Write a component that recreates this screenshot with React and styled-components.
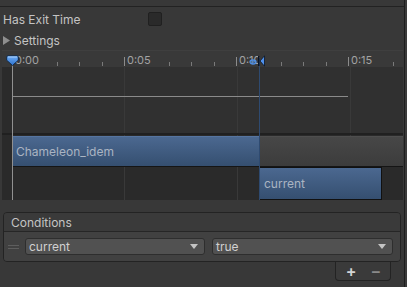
import React from 'react';
import styled, { createGlobalStyle } from 'styled-components';

const PX_PER_SEC = 22.4;
const ORIGIN = 10;
const toX = (t) => ORIGIN + t * PX_PER_SEC;

const GlobalStyle = createGlobalStyle`
  html, body {
    margin: 0;
    padding: 0;
    background: #3a3a3a;
  }
  body {
    font-family: Inter, "Noto Sans", sans-serif;
  }
`;

const Panel = styled.div`
  width: 405px;
  height: 287px;
  box-sizing: border-box;
  background: #383838;
  border-right: 1px solid #1e1e1e;
  display: flex;
  flex-direction: column;
  overflow: hidden;
  color: #c4c4c4;
  font-size: 12px;
`;

const TopStrip = styled.div`
  height: 6px;
  border-bottom: 1px solid #222;
  flex-shrink: 0;
`;

const FieldRow = styled.div`
  display: flex;
  align-items: center;
  height: 24px;
  padding-left: 3px;
`;

const FieldLabel = styled.span`
  width: 145px;
`;

const Checkbox = styled.span`
  width: 12px;
  height: 12px;
  background: #2a2a2a;
  border: 1px solid #202020;
  border-radius: 2px;
`;

const Foldout = styled.div`
  display: flex;
  align-items: center;
  gap: 4px;
  height: 18px;
  padding-left: 3px;
`;

const Timeline = styled.div`
  position: relative;
  margin: 1px 0 0 2px;
  width: 401px;
  height: 150px;
  background: #2a2a2a;
  overflow: hidden;
  flex-shrink: 0;
`;

const Ruler = styled.div`
  position: relative;
  height: 17px;
  background: #393939;
  border-top: 1px solid #3f3f3f;
  box-sizing: border-box;
`;

const Tick = styled.span`
  position: absolute;
  bottom: 1px;
  width: 1px;
  height: ${(p) => (p.$major ? 9 : 4)}px;
  background: ${(p) => (p.$major ? '#8c8c8c' : '#7a7a7a')};
`;

const TickLabel = styled.span`
  position: absolute;
  top: 2px;
  font-size: 11px;
  line-height: 14px;
  color: #a3a3a3;
`;

const TrackRow = styled.div`
  display: flex;
  height: ${(p) => p.$h}px;
`;

const Gutter = styled.div`
  width: 10px;
  background: ${(p) => p.$bg || '#2b2b2b'};
`;

const Lane = styled.div`
  position: relative;
  flex: 1;
  background-color: ${(p) => p.$bg};
  background-image: repeating-linear-gradient(
    90deg,
    transparent 0 112px,
    #393939 112px 113px
  );
`;

const Separator = styled.div`
  height: 2px;
  background: #202020;
`;

const CurveLine = styled.div`
  position: absolute;
  top: 29px;
  left: 0;
  width: 336px;
  height: 1px;
  background: #8a8a8a;
`;

const Clip = styled.div`
  position: absolute;
  top: ${(p) => (p.$boxed ? 0 : 1)}px;
  bottom: 0;
  box-sizing: border-box;
  display: flex;
  align-items: center;
  padding-left: 4px;
  font-size: 12px;
  color: #aab4c2;
  background: ${(p) =>
    p.$grey
      ? 'linear-gradient(#474747, #3c3c3c)'
      : 'linear-gradient(#4b6890, #354f70)'};
  border-top: 1px solid ${(p) => (p.$grey ? '#4e4e4e' : '#5675a0')};
  border-bottom: 1px solid #151515;
  ${(p) => p.$boxed && 'border: 1px solid #111;'}
`;

const VLine = styled.span`
  position: absolute;
  width: 1px;
  bottom: 0;
  background: ${(p) => p.$color};
  z-index: 2;
`;

const Marker = styled.svg`
  position: absolute;
  z-index: 3;
`;

const ListBox = styled.div`
  margin: 12px 0 0 3px;
  width: 398px;
  box-sizing: border-box;
  border: 1px solid #232323;
  border-radius: 4px;
  overflow: hidden;
`;

const ListHeader = styled.div`
  height: 18px;
  display: flex;
  align-items: center;
  padding-left: 7px;
  background: #3a3a3a;
  border-bottom: 1px solid #262626;
`;

const ListBody = styled.div`
  height: 29px;
  display: flex;
  align-items: center;
  padding-left: 4px;
  background: #414141;
`;

const Handle = styled.span`
  width: 11px;
  height: 4px;
  margin-right: 6px;
  border-top: 1px solid #5e5e5e;
  border-bottom: 1px solid #5e5e5e;
  box-sizing: border-box;
`;

const Dropdown = styled.div`
  width: ${(p) => p.$w}px;
  height: 17px;
  margin-right: ${(p) => p.$mr || 0}px;
  box-sizing: border-box;
  display: flex;
  align-items: center;
  justify-content: space-between;
  padding: 0 6px 0 3px;
  background: #515151;
  border: 1px solid #2e2e2e;
  border-radius: 3px;
  color: #d0d0d0;
`;

const Footer = styled.div`
  align-self: flex-end;
  margin-right: 13px;
  width: 56px;
  height: 19px;
  box-sizing: border-box;
  display: flex;
  align-items: center;
  justify-content: center;
  gap: 14px;
  padding-left: 1px;
  background: #3a3a3a;
  border: 1px solid #232323;
  border-top: none;
  border-radius: 0 0 4px 4px;
  font-size: 16px;
  font-weight: 600;
`;

const FooterBtn = styled.span`
  color: ${(p) => (p.$dim ? '#8a8a8a' : '#d4d4d4')};
  line-height: 16px;
`;

const Arrow = () => (
  <svg width="8" height="5" viewBox="0 0 8 5">
    <path d="M0 0 H8 L4 5 Z" fill="#c4c4c4" />
  </svg>
);

// seconds 0..17, the tick just after each label is hidden by the label text
const ticks = [];
for (let i = 0; i <= 17; i++) {
  if (i % 5 !== 1) ticks.push(i);
}

const labels = ['0:00', '0:05', '0:10', '0:15'];

export default function App() {
  return (
    <>
      <GlobalStyle />
      <Panel>
        <TopStrip />
        <FieldRow>
          <FieldLabel>Has Exit Time</FieldLabel>
          <Checkbox />
        </FieldRow>
        <Foldout>
          <svg width="7" height="9" viewBox="0 0 7 9">
            <path d="M0 0 L7 4.5 L0 9 Z" fill="#8e8e8e" />
          </svg>
          <span>Settings</span>
        </Foldout>

        <Timeline>
          <Ruler>
            {ticks.map((i) => (
              <Tick key={i} $major={i % 5 === 0} style={{ left: toX(i) }} />
            ))}
            {labels.map((l, i) => (
              <TickLabel key={l} style={{ left: toX(i * 5) + 3 }}>
                {l}
              </TickLabel>
            ))}
          </Ruler>

          <TrackRow $h={66}>
            <Gutter />
            <Lane $bg="#303030">
              <CurveLine />
            </Lane>
          </TrackRow>
          <Separator />
          <TrackRow $h={32}>
            <Gutter $bg="#2a2a2a" />
            <Lane $bg="#2a2a2a">
              <Clip style={{ left: 0, width: 247 }}>Chameleon_idem</Clip>
              <Clip $grey style={{ left: 247, right: 0 }} />
            </Lane>
          </TrackRow>
          <TrackRow $h={33}>
            <Gutter $bg="#2a2a2a" />
            <Lane $bg="#2a2a2a">
              <Clip $boxed style={{ left: 247, width: 123 }}>current</Clip>
            </Lane>
          </TrackRow>

          <VLine $color="#909090" style={{ left: toX(0), top: 15 }} />
          <VLine $color="#2e4a70" style={{ left: 257, top: 8 }} />

          <Marker width="13" height="11" viewBox="0 0 13 11" style={{ left: 4, top: 5 }}>
            <defs>
              <linearGradient id="ph" x1="0" y1="0" x2="0" y2="1">
                <stop offset="0" stopColor="#72b0f8" />
                <stop offset="1" stopColor="#2b70cc" />
              </linearGradient>
            </defs>
            <path
              d="M0.7 2 Q0.7 0.7 2 0.7 H11 Q12.3 0.7 12.3 2 V5.2 L6.5 10.5 L0.7 5.2 Z"
              fill="url(#ph)"
              stroke="#0f2440"
              strokeWidth="0.9"
            />
            <path d="M2 2 H11" stroke="#b9d8ff" strokeWidth="0.8" />
          </Marker>

          <Marker width="16" height="12" viewBox="0 0 16 12" style={{ left: 247, top: 5 }}>
            <ellipse cx="4" cy="7" rx="3" ry="2" fill="none" stroke="#4d8ee6" strokeWidth="1.3" />
            <circle cx="4" cy="7" r="0.9" fill="#4d8ee6" />
            <rect x="9" y="1" width="1.5" height="10" fill="#0b1422" />
            <path d="M15.5 0.8 V11.2 L11 6 Z" fill="#4f90ea" stroke="#0b1422" strokeWidth="0.8" />
          </Marker>
        </Timeline>

        <ListBox>
          <ListHeader>Conditions</ListHeader>
          <ListBody>
            <Handle />
            <Dropdown $w={180} $mr={7}>
              <span>current</span>
              <Arrow />
            </Dropdown>
            <Dropdown $w={181}>
              <span>true</span>
              <Arrow />
            </Dropdown>
          </ListBody>
        </ListBox>
        <Footer>
          <FooterBtn>+</FooterBtn>
          <FooterBtn $dim>−</FooterBtn>
        </Footer>
      </Panel>
    </>
  );
}
